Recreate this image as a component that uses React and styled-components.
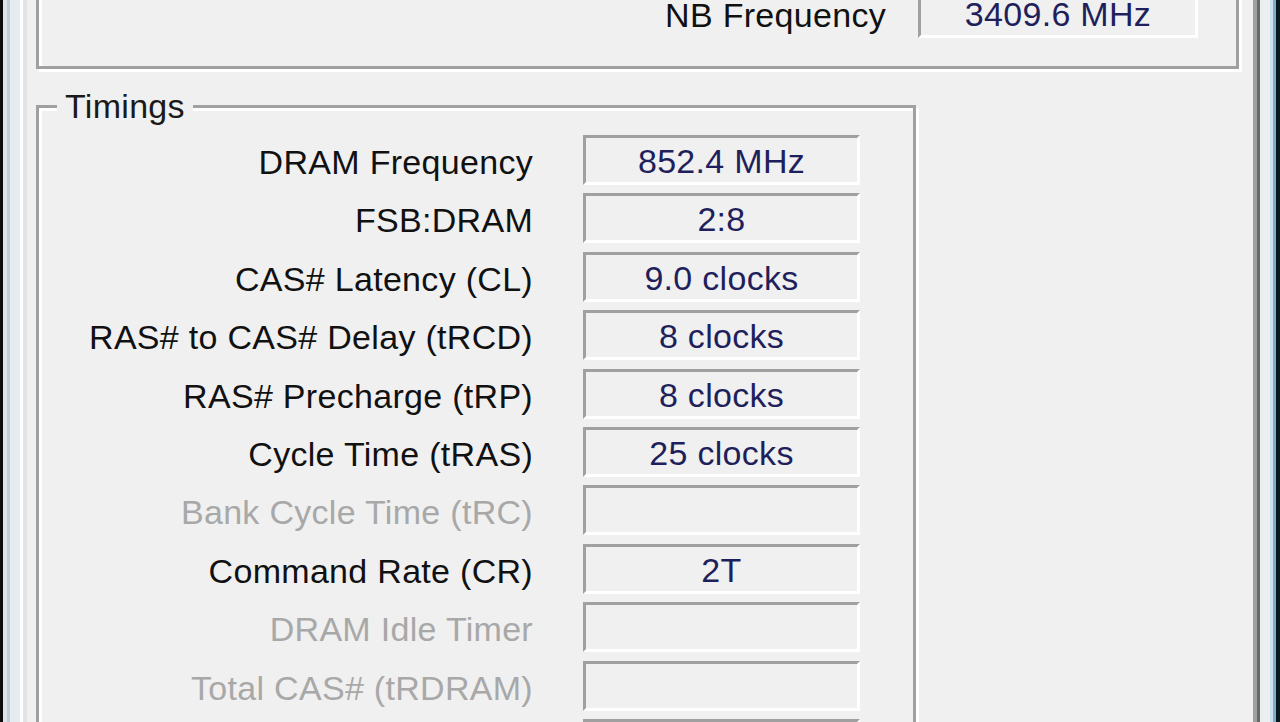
import React from 'react';
import styled, { createGlobalStyle } from 'styled-components';

const GlobalStyle = createGlobalStyle`
  html, body {
    margin: 0;
    padding: 0;
    background: #f0f0f0;
    overflow: hidden;
  }
  body {
    font-family: "Liberation Sans", Arial, sans-serif;
  }
`;

// last row only shows the top of its box, the label sits below the fold
const timings = [
  { label: 'DRAM Frequency', value: '852.4 MHz' },
  { label: 'FSB:DRAM', value: '2:8' },
  { label: 'CAS# Latency (CL)', value: '9.0 clocks' },
  { label: 'RAS# to CAS# Delay (tRCD)', value: '8 clocks' },
  { label: 'RAS# Precharge (tRP)', value: '8 clocks' },
  { label: 'Cycle Time (tRAS)', value: '25 clocks' },
  { label: 'Bank Cycle Time (tRC)', value: '', disabled: true },
  { label: 'Command Rate (CR)', value: '2T' },
  { label: 'DRAM Idle Timer', value: '', disabled: true },
  { label: 'Total CAS# (tRDRAM)', value: '', disabled: true },
  { label: '', value: '', disabled: true },
];

const Window = styled.div`
  display: flex;
  height: 722px;
  overflow: hidden;
`;

const FrameLeft = styled.div`
  flex: none;
  width: 20px;
  background: linear-gradient(
    to right,
    #0c0c0c 0 3px,
    #dce4ea 3px 7px,
    #c4ccd2 7px 10px,
    #e4ecf0 10px 20px
  );
`;

const FrameRight = styled.div`
  flex: none;
  width: 20px;
  background: linear-gradient(
    to right,
    #eceff0 0 10px,
    #cfe0ef 10px 13px,
    #7ab0c0 13px 16px,
    #0a1820 16px 20px
  );
`;

const TabPage = styled.div`
  flex: 1;
  min-width: 0;
  display: flex;
  flex-direction: column;
  padding: 0 18px 0 13px;
  background: #f0f0f0;
  border-left: 3px solid #fff;
  border-right: 3px solid #696969;
  box-shadow: inset -4px 0 0 #a0a0a0, inset 4px 0 0 #e2e4e4;
`;

const GroupBox = styled.section`
  position: relative;
  flex: none;
  border: 3px solid #a0a0a0;
  box-shadow: inset 3px 3px 0 #fff, 3px 3px 0 #fff;
`;

const TopGroup = styled(GroupBox)`
  margin-top: -30px;
  padding: 15px 38px 28px 0;
`;

const TimingsGroup = styled(GroupBox)`
  width: 880px;
  box-sizing: border-box;
  margin-top: 36px;
  padding: 27px 53px 0 0;
`;

const Legend = styled.span`
  position: absolute;
  top: -2px;
  left: 18px;
  transform: translateY(-50%);
  padding: 0 8px;
  background: #f0f0f0;
  font-size: 34px;
  letter-spacing: 0.3px;
  line-height: 1;
  color: #1a1a1a;
`;

const Rows = styled.div`
  display: flex;
  flex-direction: column;
  gap: 8.4px;
`;

const Row = styled.div`
  display: grid;
  grid-template-columns: 1fr ${(p) => p.$box}px;
  column-gap: ${(p) => p.$gap}px;
  align-items: start;
`;

const Label = styled.div`
  height: 50px;
  box-sizing: border-box;
  padding-top: 4px;
  line-height: 46px;
  font-size: 34px;
  letter-spacing: 0.3px;
  text-align: right;
  white-space: nowrap;
  color: ${(p) => (p.$disabled ? '#a8a8a8' : '#111')};
`;

const Value = styled.div`
  box-sizing: border-box;
  height: 50px;
  padding-top: 2px;
  line-height: 42px;
  border: 3px solid;
  border-color: #a0a0a0 #fff #fff #a0a0a0;
  font-size: 34px;
  letter-spacing: 0.3px;
  text-align: center;
  white-space: nowrap;
  color: #1f1f5c;
`;

export default function App() {
  return (
    <>
      <GlobalStyle />
      <Window>
        <FrameLeft />
        <TabPage>
          <TopGroup>
            <Row $box={280} $gap={32}>
              <Label>NB Frequency</Label>
              <Value>3409.6 MHz</Value>
            </Row>
          </TopGroup>
          <TimingsGroup>
            <Legend>Timings</Legend>
            <Rows>
              {timings.map((t, i) => (
                <Row key={i} $box={277} $gap={50}>
                  <Label $disabled={t.disabled}>{t.label}</Label>
                  <Value>{t.value}</Value>
                </Row>
              ))}
            </Rows>
          </TimingsGroup>
        </TabPage>
        <FrameRight />
      </Window>
    </>
  );
}
